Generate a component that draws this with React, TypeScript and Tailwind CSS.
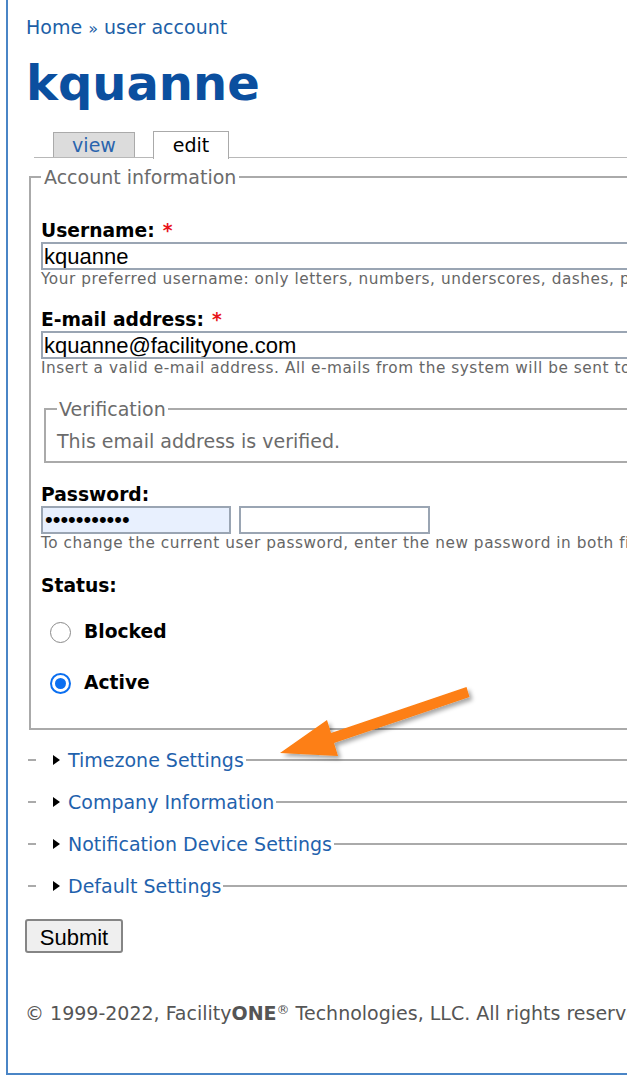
import React from "react";

const COLLAPSED = [
	"Timezone Settings",
	"Company Information",
	"Notification Device Settings",
	"Default Settings",
];

function Label({ text, required }: { text: string; required?: boolean }) {
	return (
		<div className="h-[22px] leading-[22px] text-[18.7px] font-bold text-black">
			{text}
			{required && <span className="ml-[8px] text-[#e8141b]">*</span>}
		</div>
	);
}

function Description({ children }: { children: React.ReactNode }) {
	return (
		<div className="h-[18px] leading-[18px] text-[15.3px] tracking-[0.55px] text-[#666] whitespace-nowrap">
			{children}
		</div>
	);
}

function Radio({ checked, label, className }: { checked?: boolean; label: string; className?: string }) {
	return (
		<div className={`flex h-[28px] items-center ${className ?? ""}`}>
			{checked ? (
				<span className="ml-[9px] flex h-[21px] w-[21px] items-center justify-center rounded-full border-2 border-[#0b6ff0] bg-white">
					<span className="h-[11px] w-[11px] rounded-full bg-[#0b6ff0]" />
				</span>
			) : (
				<span className="ml-[9px] h-[21px] w-[21px] rounded-full border-[1.5px] border-[#8a8a8a] bg-white" />
			)}
			<span className="ml-[13px] text-[18.7px] font-bold text-black">{label}</span>
		</div>
	);
}

export default function App() {
	return (
		<div className="relative h-[1080px] w-[627px] overflow-hidden bg-white font-['DejaVu_Sans',sans-serif]">
			<div className="ml-[6px] h-[1075px] w-[1100px] border-b-2 border-l-2 border-[#4a85c6] pl-[18px]">
				{/* Breadcrumb */}
				<div className="pt-[15px] text-[19px] leading-[24px] text-[#1d5fa7]">
					Home <span className="text-[16px]">»</span> user account
				</div>

				<h1 className="mt-[14px] text-[48px] font-bold leading-[56px] text-[#0b4f9f]">kquanne</h1>

				{/* Tabs */}
				<div className="ml-[8px] mt-[20px] flex h-[27px] items-end border-b-[1.5px] border-[#b8b8b8]">
					<div className="ml-[19px] flex h-[25px] w-[82px] items-center justify-center border-[1.5px] border-b-0 border-[#aaa] bg-[#dcdcdc] text-[19px] text-[#2a64ad]">
						view
					</div>
					<div className="-mb-[1.5px] ml-[18px] flex h-[28px] w-[76px] items-center justify-center border-[1.5px] border-b-0 border-[#aaa] bg-white text-[19px] text-black">
						edit
					</div>
				</div>

				{/* Account information */}
				<fieldset className="ml-[3px] mt-[8px] border-2 border-[#aaa] px-[10px] pb-[31px]">
					<legend className="px-[3px] text-[19px] leading-[22px] text-[#6b6b6b]">Account information</legend>

					<div className="mt-[32px]">
						<Label text="Username:" required />
						<input
							readOnly
							defaultValue="kquanne"
							className="block h-[28px] w-full border-2 border-[#9aa5b3] bg-white px-[1px] font-['Liberation_Sans',sans-serif] text-[22px] text-black outline-none"
						/>
						<Description>
							Your preferred username: only letters, numbers, underscores, dashes, periods, and the @ sign.
						</Description>
					</div>

					<div className="mt-[21px]">
						<Label text="E-mail address:" required />
						<input
							readOnly
							defaultValue="kquanne@facilityone.com"
							className="block h-[28px] w-full border-2 border-[#9aa5b3] bg-white px-[1px] font-['Liberation_Sans',sans-serif] text-[22px] text-black outline-none"
						/>
						<Description>
							Insert a valid e-mail address. All e-mails from the system will be sent to this address.
						</Description>
					</div>

					<fieldset className="ml-[3px] mt-[21px] border-2 border-[#aaa] pb-[9px] pl-[11px]">
						<legend className="px-[2px] text-[19px] leading-[22px] text-[#6b6b6b]">Verification</legend>
						<div className="mt-[10px] text-[19px] leading-[22px] text-[#6b6b6b]">This email address is verified.</div>
					</fieldset>

					<div className="mt-[21px]">
						<Label text="Password:" />
						<div className="flex gap-[8px]">
							<div className="flex h-[28px] w-[190px] items-center border-2 border-[#9aa5b3] bg-[#e8f0fe] px-[2px] font-['Liberation_Sans',sans-serif] text-[22px] leading-none text-black">
								•••••••••••
							</div>
							<div className="h-[28px] w-[191px] border-2 border-[#9aa5b3] bg-white" />
						</div>
						<Description>
							To change the current user password, enter the new password in both fields.
						</Description>
					</div>

					<div className="mt-[23px]">
						<Label text="Status:" />
						<Radio label="Blocked" className="mt-[21px]" />
						<Radio label="Active" checked className="mt-[23px]" />
					</div>
				</fieldset>

				{/* Collapsed fieldsets */}
				<div className="mt-[9px]">
					{COLLAPSED.map((title) => (
						<div key={title} className="flex h-[42px] items-center">
							<span className="ml-[2px] h-[2px] w-[8px] bg-[#aaa]" />
							<span className="ml-[17px] h-0 w-0 border-y-[5.5px] border-l-[7px] border-y-transparent border-l-black" />
							<span className="ml-[8px] text-[19px] text-[#1f62ad]">{title}</span>
							<span className="ml-[2px] h-[2px] flex-1 bg-[#aaa]" />
						</div>
					))}
				</div>

				<button
					type="button"
					className="-ml-px mt-[12px] h-[34px] w-[98px] rounded-[3px] border-2 border-[#858585] bg-[#efefef] font-['Liberation_Sans',sans-serif] text-[22px] text-black"
				>
					Submit
				</button>

				<div className="-ml-px mt-[49px] whitespace-nowrap text-[19px] leading-[22px] text-[#555]">
					© 1999-2022, Facility<span className="font-bold">ONE</span>
					<sup className="text-[13px]">®</sup> Technologies, LLC. All rights reserved.
				</div>
			</div>

			{/* Annotation arrow */}
			<svg className="pointer-events-none absolute left-0 top-0" width="627" height="1080" viewBox="0 0 627 1080">
				<defs>
					<filter id="shadow" x="-20%" y="-20%" width="140%" height="160%">
						<feDropShadow dx="3" dy="3" stdDeviation="2" floodColor="#000" floodOpacity="0.35" />
					</filter>
				</defs>
				<polygon
					points="280,753 327,720 331,733 466.5,687 469.5,697 334,743 338,756"
					fill="#fd7f12"
					filter="url(#shadow)"
				/>
			</svg>
		</div>
	);
}
